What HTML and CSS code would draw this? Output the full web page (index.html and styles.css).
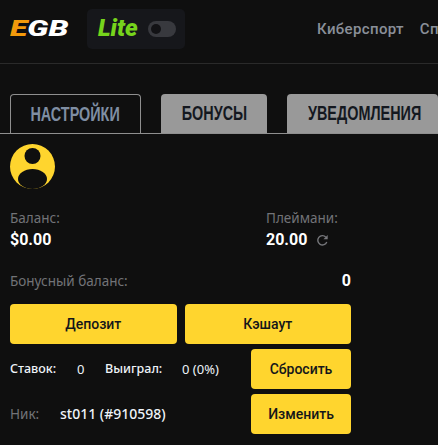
FILE: index.html
```html
<!DOCTYPE html>
<html lang="ru">
<head>
    <meta charset="UTF-8">
    <title>EGB</title>
    <link rel="stylesheet" href="styles.css">
</head>
<body>
    <header class="topbar">
        <div class="logo"><span class="logo-text"><span class="logo-e">E</span>GB</span></div>
        <div class="lite">
            <span class="lite-text">Lite</span>
            <span class="toggle"><span class="toggle-knob"></span></span>
        </div>
        <nav class="topnav">
            <a>Киберспорт</a>
            <a>Спорт</a>
        </nav>
    </header>

    <div class="tabs">
        <div class="tab active"><span>НАСТРОЙКИ</span></div>
        <div class="tab tab-bonus"><span>БОНУСЫ</span></div>
        <div class="tab tab-notify"><span>УВЕДОМЛЕНИЯ</span></div>
    </div>

    <main class="content">
        <svg class="avatar" viewBox="0 0 45 45" width="45" height="45">
            <circle cx="22.5" cy="22.5" r="22.5" fill="#ffd52e"/>
            <circle cx="22.5" cy="12" r="8" fill="#0f0f0f"/>
            <ellipse cx="22.5" cy="35" rx="14.5" ry="10" fill="#0f0f0f"/>
        </svg>

        <div class="balances">
            <div class="balance">
                <div class="label">Баланс:</div>
                <div class="value">$0.00</div>
            </div>
            <div class="balance">
                <div class="label">Плеймани:</div>
                <div class="value">20.00
                    <svg class="refresh" viewBox="0 0 14 14" width="13" height="13">
                        <path d="M11.6 8.6A5 5 0 1 1 10.6 3.4" fill="none" stroke="#77787c" stroke-width="1.5"/>
                        <path d="M12.6 1v4.6H8z" fill="#77787c"/>
                    </svg>
                </div>
            </div>
        </div>

        <div class="bonus-row">
            <span class="label">Бонусный баланс:</span>
            <span class="value">0</span>
        </div>

        <div class="actions">
            <button class="btn">Депозит</button>
            <button class="btn">Кэшаут</button>
        </div>

        <div class="info-row">
            <div class="stats">
                <span class="stat-name stat-bets">Ставок:</span>
                <span class="stat-num stat-count">0</span>
                <span class="stat-name stat-won">Выиграл:</span>
                <span class="stat-num">0 (0%)</span>
            </div>
            <button class="btn btn-side">Сбросить</button>
        </div>

        <div class="info-row nick-row">
            <div class="stats">
                <span class="nick-label">Ник:</span>
                <span class="nick">st011 (#910598)</span>
            </div>
            <button class="btn btn-side">Изменить</button>
        </div>
    </main>
</body>
</html>
```

FILE: styles.css
```css
* {
    padding: 0;
    margin: 0;
    box-sizing: border-box;
}

html, body {
    height: 445px;
    overflow: hidden;
}

body {
    background-color: #0f0f0f;
    font-family: 'Noto Sans', 'Open Sans', sans-serif;
    width: 438px;
}

.topbar {
    height: 64px;
    border-bottom: 1px solid #2a2a2a;
    display: flex;
    align-items: flex-start;
    padding-left: 10px;
    overflow: hidden;
}

.logo {
    width: 77px;
    flex-shrink: 0;
    margin-top: 17px;
    font-family: 'Roboto', sans-serif;
    font-size: 22px;
    line-height: 24px;
    font-weight: 900;
    font-style: italic;
    color: #ffffff;
}

.logo-text {
    display: inline-block;
    transform: scaleX(1.45);
    transform-origin: left center;
}

.logo-e {
    color: #f39a0b;
}

.lite {
    width: 98px;
    height: 40px;
    flex-shrink: 0;
    margin-top: 9px;
    background-color: #16171b;
    border-radius: 5px;
    display: flex;
    align-items: center;
    padding-left: 11px;
}

.lite-text {
    font-family: 'Roboto', sans-serif;
    font-size: 24px;
    line-height: 38px;
    height: 40px;
    font-weight: 900;
    font-style: italic;
    color: #76d41c;
    width: 49px;
}

.toggle {
    width: 28px;
    height: 16px;
    margin-left: 1px;
    border-radius: 8px;
    background-color: #38393e;
    display: flex;
    align-items: center;
    padding-left: 3px;
}

.toggle-knob {
    width: 10px;
    height: 10px;
    border-radius: 50%;
    background-color: #121215;
}

.topnav {
    display: flex;
    gap: 16px;
    margin-left: 132px;
    margin-top: 20px;
    font-family: 'Roboto', sans-serif;
    font-size: 15px;
    letter-spacing: 0.35px;
    line-height: 18px;
    font-weight: 500;
    color: #8a8f99;
    white-space: nowrap;
}

.tabs {
    display: flex;
    align-items: flex-end;
    height: 40px;
    margin-top: 30px;
    padding-left: 10px;
    border-bottom: 1px solid #8f8f8f;
    white-space: nowrap;
    overflow: hidden;
}

.tab {
    height: 39px;
    flex-shrink: 0;
    display: flex;
    justify-content: center;
    align-items: center;
    background-color: #999999;
    color: #14181f;
    border-radius: 4px 4px 0 0;
    font-family: 'Liberation Sans', sans-serif;
    font-size: 20px;
    font-weight: 700;
}

.tab span {
    flex-shrink: 0;
    transform: scaleX(0.72);
}

.tab.active {
    width: 131px;
    background-color: #0f0f0f;
    color: #7f8ea3;
    border: 1px solid #8f8f8f;
    border-bottom: none;
}

.tab-bonus {
    width: 106px;
    margin-left: 20px;
}

.tab-notify {
    width: 151px;
    margin-left: 20px;
    padding-left: 5px;
}

.content {
    width: 341px;
    margin-left: 10px;
    padding-top: 10px;
}

.avatar {
    display: block;
}

.balances {
    display: flex;
    margin-top: 20px;
}

.balance:first-child {
    width: 256px;
    flex-shrink: 0;
}

.label {
    font-size: 13.5px;
    line-height: 18px;
    color: #727377;
}

.value {
    margin-top: 2px;
    font-family: 'Roboto', sans-serif;
    font-size: 16px;
    font-weight: 700;
    line-height: 22px;
    color: #ffffff;
}

.refresh {
    margin-left: 5px;
    vertical-align: -2px;
}

.bonus-row {
    display: flex;
    justify-content: space-between;
    margin-top: 19px;
    height: 22px;
    align-items: center;
}

.bonus-row .value {
    margin-top: 0;
}

.actions {
    display: flex;
    gap: 8px;
    margin-top: 12px;
}

.btn {
    flex: 1;
    height: 40px;
    border: none;
    border-radius: 4px;
    background-color: #ffd52e;
    color: #14161a;
    font-family: 'Roboto', sans-serif;
    font-size: 14px;
    font-weight: 500;
}

.info-row {
    display: flex;
    justify-content: space-between;
    align-items: center;
    margin-top: 5px;
}

.btn-side {
    flex: none;
    width: 100px;
}

.stats {
    display: flex;
    font-size: 12.5px;
    line-height: 18px;
    color: #eef3f8;
}

.stat-name {
    font-weight: 500;
}

.stat-bets {
    width: 67px;
}

.stat-won {
    width: 77px;
}

.stat-count {
    width: 28px;
}

.stat-num {
    font-size: 13px;
}

.nick-label {
    width: 50px;
    font-size: 13.5px;
    color: #727377;
}

.nick {
    font-size: 14px;
    font-weight: 500;
}
```
